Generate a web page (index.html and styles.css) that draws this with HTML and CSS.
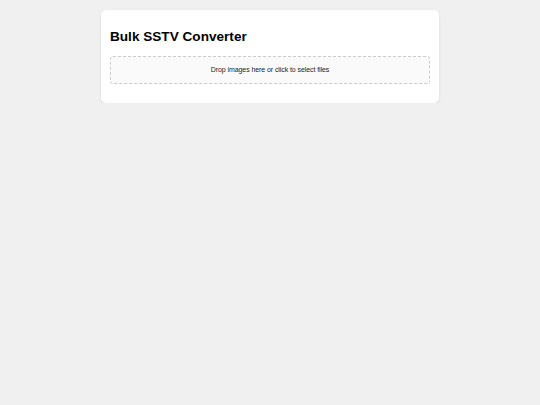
FILE: index.html
```html
<!DOCTYPE html>
<html>
<head>
<meta charset="utf-8">
<link rel="stylesheet" href="styles.css">
</head>
<body>
<div class="card">
  <h1 class="title">Bulk SSTV Converter</h1>
  <div class="dropzone">Drop images here or click to select files</div>
</div>
</body>
</html>
```
FILE: styles.css
```css
html, body {
  margin: 0;
  padding: 0;
  background: #f0f0f0;
  font-family: "Liberation Sans", Arial, sans-serif;
}
.card {
  width: 320px;
  margin: 10px auto 0;
  padding: 9px;
  background: #ffffff;
  border-radius: 5px;
  box-shadow: 0 1px 3px rgba(0, 0, 0, 0.1);
}
.title {
  margin: 10px 0 12px;
  font-size: 13.6px;
  line-height: 15px;
  font-weight: bold;
  color: #000;
}
.dropzone {
  box-sizing: border-box;
  height: 28px;
  margin-bottom: 10px;
  padding-bottom: 1px;
  border: 1px dashed #cccccc;
  border-radius: 3px;
  background: #fafafa;
  display: flex;
  align-items: center;
  justify-content: center;
  font-size: 7px;
  letter-spacing: -0.08px;
  color: #222;
}
```
